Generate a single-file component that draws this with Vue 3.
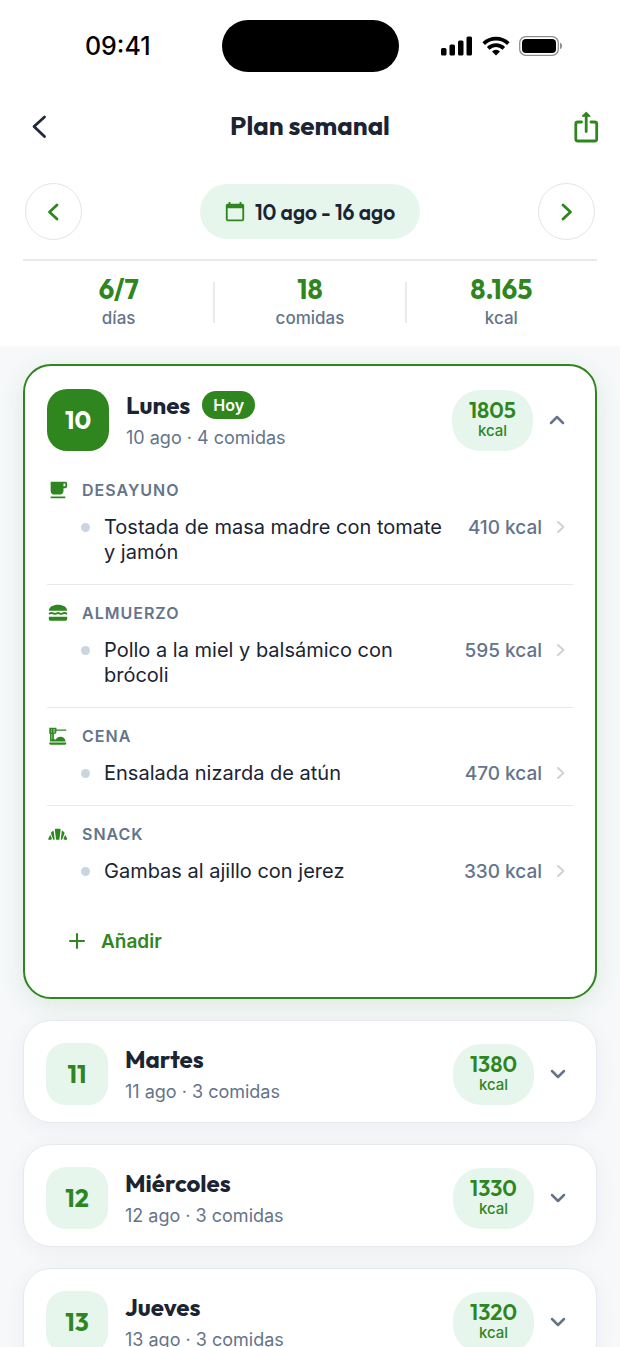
<script setup>
import { ref } from 'vue'

const stats = [
  { value: '6/7', label: 'días' },
  { value: '18', label: 'comidas' },
  { value: '8.165', label: 'kcal' },
]

const openDay = ref(10)

const days = [
  {
    num: 10, name: 'Lunes', today: true, detail: '10 ago · 4 comidas', kcal: 1805,
    meals: [
      { type: 'Desayuno', icon: 'coffee', dish: 'Tostada de masa madre con tomate y jamón', kcal: 410 },
      { type: 'Almuerzo', icon: 'burger', dish: 'Pollo a la miel y balsámico con brócoli', kcal: 595 },
      { type: 'Cena', icon: 'dinner', dish: 'Ensalada nizarda de atún', kcal: 470 },
      { type: 'Snack', icon: 'croissant', dish: 'Gambas al ajillo con jerez', kcal: 330 },
    ],
  },
  { num: 11, name: 'Martes', detail: '11 ago · 3 comidas', kcal: 1380, meals: [] },
  { num: 12, name: 'Miércoles', detail: '12 ago · 3 comidas', kcal: 1330, meals: [] },
  { num: 13, name: 'Jueves', detail: '13 ago · 3 comidas', kcal: 1320, meals: [] },
]

const icons = {
  coffee: 'M20 3H4v10c0 2.21 1.79 4 4 4h6c2.21 0 4-1.79 4-4v-3h2c1.11 0 2-.89 2-2V5c0-1.11-.89-2-2-2zm0 5h-2V5h2v3zM4 19h16v2H4z',
  burger: 'M2 16h20v2.5c0 1.1-.9 2-2 2H4c-1.1 0-2-.9-2-2zM22 9.5C22 5.5 17.5 3 12 3S2 5.5 2 9.5zM2 11.6c1.7 0 1.7-.6 3.3-.6s1.7 1 3.4 1 1.6-1 3.3-1 1.7 1 3.3 1 1.7-1 3.4-1 1.6.6 3.3.6v2c-1.7 0-1.7-.6-3.3-.6s-1.7 1-3.4 1-1.6-1-3.3-1-1.7 1-3.3 1-1.7-1-3.4-1-1.6.6-3.3.6z',
  dinner: 'M2.5 19H21v1.2c0 .8-.5 1.3-1.3 1.3H3.8c-.8 0-1.3-.5-1.3-1.3zM2.5 3h7.8v2H21v1.4H10.3v1c0 1.400-.8 2.200-2 2.200H7.500v5.600c.7.100 1.400.4 2 .9.900-2 2.900-3.300 5.200-3.300 3 0 5.200 2.100 5.700 5.200H3.300V9.600h-.8zM4.300 5v.7h1.100V5zM6.800 5v.7h2V5zM4.300 7.100v.7h1.100v-.7zM6.800 7.100v.7h2v-.7zM5 9.800v6h.6v-6z',
  croissant: 'M9.800 6.400h3.800c.8 0 1.300.6 1.200 1.400L13.500 18.400H9.900L8.600 7.800c-.1-.8.4-1.400 1.200-1.400zM6.400 8.400c.5-.2.8.1.9.6L8.400 18.400H6.900L4.300 11.500c-.2-.6 0-1.100.5-1.500zM3.100 13.600c.3-.3.7-.2.9.2l1.300 3.200c.1.300 0 .6-.2.8-.8.5-1.600.7-2.600.6-.9 0-1.400-.7-1-1.500zM17 8.400c-.5-.2-.8.100-.9.6L15 18.400h1.500L19.100 11.500c.2-.6 0-1.100-.5-1.500zM20.300 13.600c-.3-.3-.7-.2-.9.2l-1.300 3.200c-.1.300 0 .6.200.8.8.5 1.600.7 2.600.6.9 0 1.400-.7 1-1.500z',
}

function toggle(num) {
  openDay.value = openDay.value === num ? null : num
}
</script>

<template>
  <div class="screen">
    <header class="top">
      <div class="status">
        <span class="time">09:41</span>
        <span class="island"></span>
        <span class="signals">
          <svg width="32" height="20" viewBox="0 0 32 20" aria-hidden="true">
            <rect x="0" y="12" width="5.500" height="7.500" rx="1.500" />
            <rect x="8.500" y="8.500" width="5.500" height="11" rx="1.500" />
            <rect x="17" y="4.500" width="5.500" height="15" rx="1.500" />
            <rect x="25.500" y="0.500" width="5.500" height="19" rx="1.500" />
          </svg>
          <svg width="28" height="20" viewBox="0 0 28 20" aria-hidden="true">
            <g fill="none" stroke="#000" stroke-width="3.700">
              <path d="M1.700 7.600a17.600 17.600 0 0 1 24.600 0" />
              <path d="M6.200 12.300a11.200 11.200 0 0 1 15.600 0" />
            </g>
            <path d="M14 19.500l-4-4.100a5.800 5.800 0 0 1 8 0z" />
          </svg>
          <svg width="44" height="20" viewBox="0 0 44 20" aria-hidden="true">
            <rect x="0.700" y="0.700" width="38.600" height="18.600" rx="6" fill="none" stroke="#8e8e8e" stroke-width="1.300" />
            <rect x="3" y="3" width="34" height="14" rx="4" />
            <path d="M41 6.800c2.800 1 2.800 5.400 0 6.400z" fill="#8e8e8e" />
          </svg>
        </span>
      </div>

      <div class="titlebar">
        <button class="bare" type="button" aria-label="Volver">
          <svg width="34" height="34" viewBox="0 0 34 34" fill="none" stroke="#1f2937" stroke-width="2.800" stroke-linecap="round" stroke-linejoin="round">
            <path d="M22.500 7 12 16.500l10.500 10" />
          </svg>
        </button>
        <h1>Plan semanal</h1>
        <button class="bare" type="button" aria-label="Compartir">
          <svg width="28" height="34" viewBox="0 0 28 34" fill="none" stroke="#2f861f" stroke-width="2.800" stroke-linecap="round" stroke-linejoin="round">
            <path d="M9.500 12H5.800A2 2 0 0 0 3.800 14v15a2 2 0 0 0 2 2h16.900a2 2 0 0 0 2-2V14a2 2 0 0 0-2-2H19M14.200 21.500V4.500" />
            <path d="M14.200 2.500 18 6.200h-7.600z" fill="#2f861f" stroke-width="1.200" />
          </svg>
        </button>
      </div>

      <nav class="week">
        <button class="round" type="button" aria-label="Semana anterior">
          <svg width="24" height="24" viewBox="0 0 24 24"><path d="M15 5 7.500 12l7.500 7" /></svg>
        </button>
        <button class="range" type="button">
          <svg width="20" height="22" viewBox="0 0 20 24" aria-hidden="true">
            <path fill="#2f861f" d="M18 3h-1V1h-2v2H5V1H3v2H2C.9 3 0 3.900 0 5v15c0 1.100.9 2 2 2h16c1.100 0 2-.9 2-2V5c0-1.100-.9-2-2-2zm0 17.300H2V8h16z" />
          </svg>
          <span>10 ago - 16 ago</span>
        </button>
        <button class="round" type="button" aria-label="Semana siguiente">
          <svg width="24" height="24" viewBox="0 0 24 24"><path d="M9 5 16.500 12 9 19" /></svg>
        </button>
      </nav>

      <dl class="stats">
        <div v-for="s in stats" :key="s.label" class="stat">
          <dt>{{ s.label }}</dt>
          <dd>{{ s.value }}</dd>
        </div>
      </dl>
    </header>

    <main class="list">
      <section v-for="d in days" :key="d.num" class="card" :class="{ current: d.today }">
        <button class="head" type="button" :aria-expanded="openDay === d.num" @click="toggle(d.num)">
          <span class="num">{{ d.num }}</span>
          <span class="who">
            <span class="name">{{ d.name }}<span v-if="d.today" class="today">Hoy</span></span>
            <span class="detail">{{ d.detail }}</span>
          </span>
          <span class="energy"><b>{{ d.kcal }}</b><small>kcal</small></span>
          <svg class="chev" width="16" height="16" viewBox="0 0 16 16" aria-hidden="true">
            <path :d="openDay === d.num ? 'M2 11l6-6 6 6' : 'M2 5l6 6 6-6'" />
          </svg>
        </button>

        <div v-if="openDay === d.num" class="body">
          <div v-for="m in d.meals" :key="m.type" class="meal">
            <h2>
              <svg width="22" height="22" viewBox="0 0 24 24" aria-hidden="true">
                <path fill="#2f861f" fill-rule="evenodd" :d="icons[m.icon]" />
              </svg>
              {{ m.type }}
            </h2>
            <a class="dish" href="#">
              <i class="dot"></i>
              <span class="dish-name">{{ m.dish }}</span>
              <span class="dish-kcal">{{ m.kcal }} kcal</span>
              <svg width="10" height="24" viewBox="0 0 10 24" aria-hidden="true"><path d="M2 7l5.500 5L2 17" /></svg>
            </a>
          </div>
          <button class="add" type="button">
            <svg width="16" height="16" viewBox="0 0 16 16" aria-hidden="true"><path d="M8 1v14M1 8h14" /></svg>
            Añadir
          </button>
        </div>
      </section>
    </main>
  </div>
</template>

<style>
body {
  margin: 0;
  background: #f6f8fa;
}
</style>

<style scoped>
.screen {
  --green: #2f861f;
  --mint: #e6f6ec;
  --ink: #1a2433;
  --slate: #64748b;
  --line: #e8ebee;
  --display: Outfit, Lato, sans-serif;
  height: 100vh;
  display: flex;
  flex-direction: column;
  background: #f6f8fa;
  color: var(--ink);
  font-family: Inter, sans-serif;
}
button {
  margin: 0;
  padding: 0;
  border: 0;
  background: none;
  color: inherit;
  font: inherit;
  cursor: pointer;
}
svg {
  flex: none;
  display: block;
}
.top {
  flex: none;
  background: #fff;
}
.status {
  display: grid;
  grid-template-columns: 1fr 177px 1fr;
  align-items: center;
  height: 92px;
}
.time {
  justify-self: center;
  padding-left: 14px;
  font-size: 25px;
  font-weight: 500;
  color: #000;
}
.island {
  height: 52px;
  border-radius: 26px;
  background: #000;
}
.signals {
  display: flex;
  gap: 9px;
  justify-self: center;
  padding-right: 15px;
}
.titlebar {
  display: flex;
  align-items: center;
  justify-content: space-between;
  height: 70px;
  padding: 0 20px 0 22px;
}
.bare {
  display: flex;
}
h1 {
  margin: 0;
  padding: 0 8px 2px 0;
  font: 700 26px/34px var(--display);
}
.week {
  display: flex;
  align-items: center;
  justify-content: space-between;
  margin: 0 23px;
  padding: 21px 2px 19px;
  border-bottom: 2px solid var(--line);
}
.round {
  display: grid;
  place-items: center;
  width: 57px;
  height: 57px;
  border: 1px solid #e2e5e8;
  border-radius: 50%;
}
.round path {
  fill: none;
  stroke: var(--green);
  stroke-width: 2.8;
  stroke-linecap: round;
  stroke-linejoin: round;
}
.range {
  display: flex;
  align-items: center;
  gap: 10px;
  height: 55px;
  padding: 0 25px;
  border-radius: 28px;
  background: var(--mint);
  font: 600 21px/28px var(--display);
}
.stats {
  display: flex;
  margin: 0 23px;
  padding: 11px 0 16px;
}
.stat {
  flex: 1;
  display: flex;
  flex-direction: column-reverse;
  align-items: center;
  position: relative;
}
.stat + .stat::before {
  content: '';
  position: absolute;
  left: -1px;
  top: 10px;
  bottom: 7px;
  width: 2px;
  background: var(--line);
}
dt {
  font-size: 17px;
  line-height: 24px;
  font-weight: 500;
  color: var(--slate);
}
dd {
  margin: 0;
  font: 700 27px/34px var(--display);
  color: var(--green);
}
.list {
  flex: 1;
  min-height: 0;
  overflow-y: auto;
  scrollbar-width: none;
  display: flex;
  flex-direction: column;
  gap: 21px;
  padding: 18px 23px 0;
}
.card {
  flex: none;
  padding: 22px 22px 17px;
  border: 1px solid #e6e9ed;
  border-radius: 28px;
  background: #fff;
  box-shadow: 0 4px 22px rgba(30, 41, 59, 0.05);
}
.card.current {
  padding: 23px 22px 32px;
  border: 2px solid var(--green);
  box-shadow: 0 6px 24px rgba(47, 134, 31, 0.12);
}
.head {
  display: flex;
  align-items: center;
  width: 100%;
  text-align: left;
}
.num {
  flex: none;
  display: grid;
  place-items: center;
  width: 62px;
  height: 62px;
  border-radius: 20px;
  background: var(--mint);
  color: var(--green);
  font: 700 25px/30px var(--display);
}
.current .num {
  background: var(--green);
  color: #fff;
}
.who {
  flex: 1;
  display: flex;
  flex-direction: column;
  gap: 6px;
  margin-left: 17px;
}
.name {
  display: flex;
  align-items: center;
  gap: 12px;
  font: 700 24px/30px var(--display);
}
.today {
  padding: 0 11px;
  border-radius: 14px;
  background: var(--green);
  color: #fff;
  font: 600 16px/28px Inter, sans-serif;
}
.detail {
  font-size: 18px;
  line-height: 24px;
  color: var(--slate);
}
.energy {
  display: flex;
  flex-direction: column;
  align-items: center;
  justify-content: center;
  width: 81px;
  height: 61px;
  border-radius: 28px;
  background: var(--mint);
  color: var(--green);
}
.energy b {
  font: 600 22px/22px var(--display);
}
.energy small {
  font-size: 15px;
  line-height: 20px;
  font-weight: 500;
}
.chev {
  margin: 0 8px 0 16px;
}
.chev path,
.dish svg path,
.add path {
  fill: none;
  stroke: var(--slate);
  stroke-width: 2.5;
  stroke-linecap: round;
  stroke-linejoin: round;
}
.body {
  padding-top: 11px;
}
.meal {
  padding: 16px 0 19px;
}
.meal + .meal {
  border-top: 1px solid var(--line);
}
h2 {
  display: flex;
  align-items: center;
  gap: 13px;
  margin: 0 0 13px;
  font-size: 16px;
  line-height: 24px;
  font-weight: 600;
  text-transform: uppercase;
  letter-spacing: 1px;
  color: var(--slate);
}
.dish {
  display: flex;
  align-items: flex-start;
  padding: 0 7px 0 34px;
  color: inherit;
  font-size: 20px;
  line-height: 25px;
  text-decoration: none;
}
.dot {
  flex: none;
  width: 9px;
  height: 9px;
  margin-top: 8px;
  border-radius: 50%;
  background: #cbd5e1;
}
.dish-name {
  flex: 1;
  margin: 0 12px 0 14px;
}
.dish-kcal {
  flex: none;
  margin-right: 14px;
  font-size: 19px;
  font-weight: 500;
  color: var(--slate);
}
.dish svg path {
  stroke: #cdd2d8;
  stroke-width: 2;
}
.add {
  display: flex;
  align-items: center;
  gap: 16px;
  height: 48px;
  margin: 14px 0 0 14px;
  padding: 0 8px;
  color: var(--green);
  font-size: 19px;
  font-weight: 600;
}
.add path {
  stroke: var(--green);
  stroke-width: 2;
}
</style>
